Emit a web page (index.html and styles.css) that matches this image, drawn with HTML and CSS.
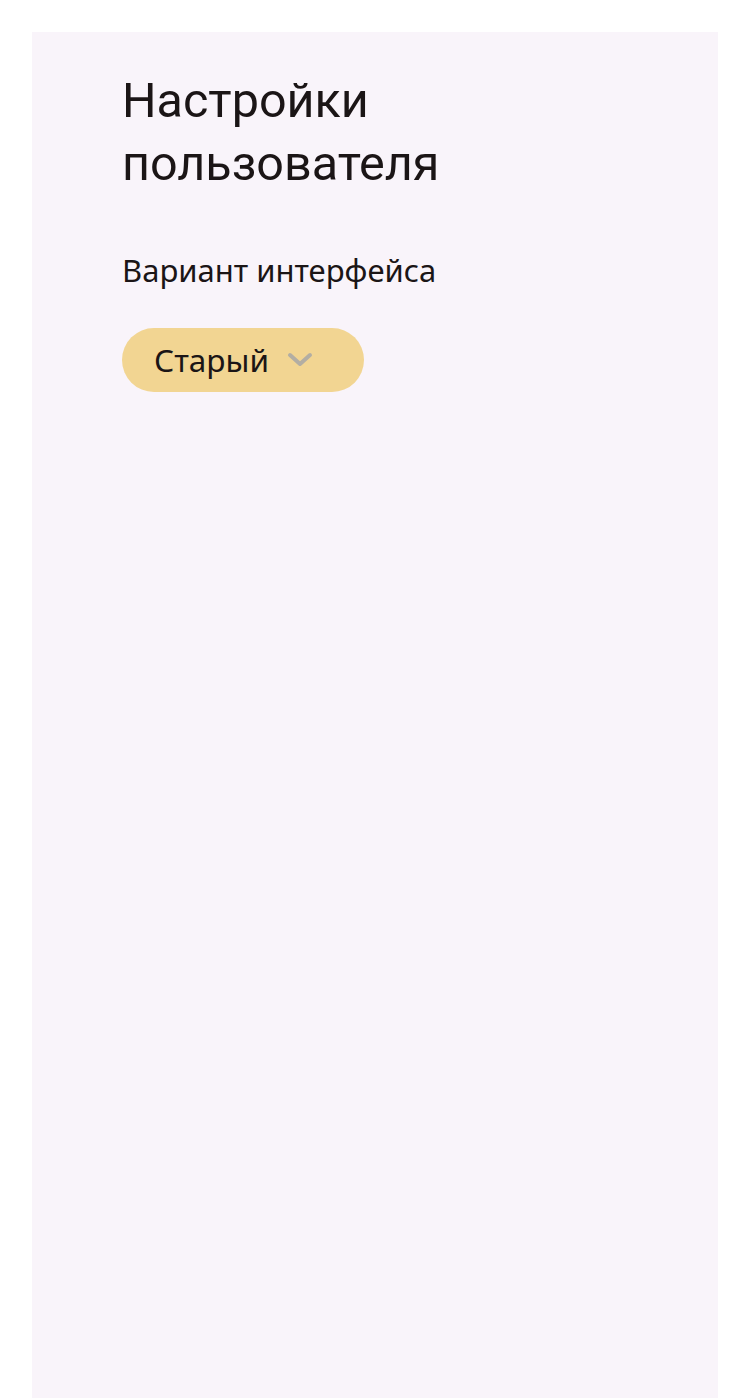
FILE: index.html
```html
<!DOCTYPE html>
<html lang="ru">
<head>
<meta charset="utf-8">
<link rel="stylesheet" href="styles.css">
</head>
<body>
<main class="panel">
  <h1 class="title">Настройки пользователя</h1>
  <div class="label">Вариант интерфейса</div>
  <button class="select">
    <span class="select-text">Старый</span>
    <svg class="chev" width="26" height="16" viewBox="0 0 26 16"><path d="M3 3 L13 12 L23 3" fill="none" stroke="#b3aea3" stroke-width="4" stroke-linecap="round" stroke-linejoin="round"/></svg>
  </button>
</main>
</body>
</html>
```
FILE: styles.css
```css
html, body { margin: 0; padding: 0; background: #fff; }
body { padding: 32px 32px 0 32px; height: 1398px; box-sizing: border-box; }
.panel {
  background: #f9f4fa;
  height: 1366px;
  padding: 37px 90px 0 90px;
  box-sizing: border-box;
  color: #1b1516;
}
.title {
  margin: 0;
  width: 360px;
  font-family: Roboto, sans-serif;
  font-weight: 400;
  font-size: 48.5px;
  line-height: 63px;
}
.label {
  margin-top: 55px;
  font-family: "Noto Sans", sans-serif;
  font-size: 31px;
  line-height: 40px;
}
.select {
  margin-top: 38px;
  display: flex;
  align-items: center;
  gap: 18px;
  width: 242px;
  height: 64px;
  border: none;
  border-radius: 32px;
  background: #f2d592;
  padding: 0 0 0 32px;
  box-sizing: border-box;
  color: #1b1516;
}
.select-text {
  font-family: "Noto Sans", sans-serif;
  font-size: 31.5px;
  line-height: 40px;
}
.chev { display: block; }
```
